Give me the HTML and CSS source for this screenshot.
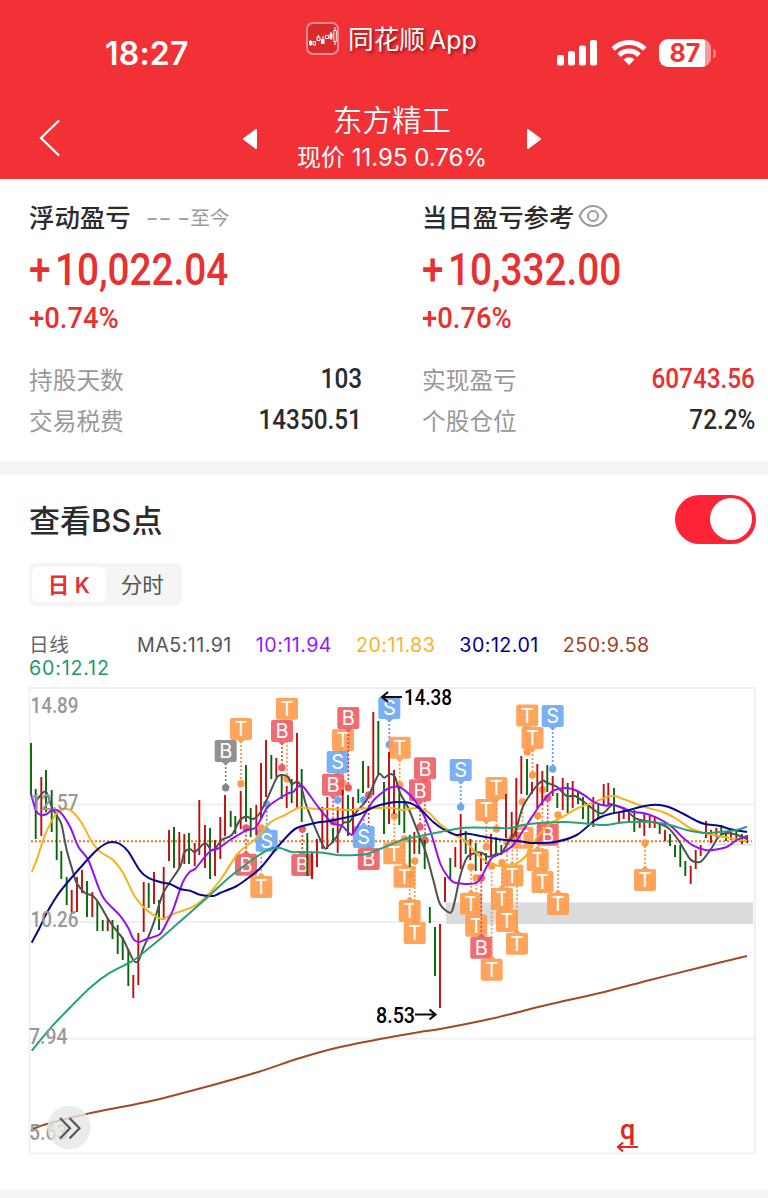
FILE: index.html
```html
<!DOCTYPE html>
<html lang="zh-CN">
<head>
    <meta charset="UTF-8">
    <meta name="viewport" content="width=device-width, initial-scale=1.0">
    <title>东方精工</title>
    <link rel="stylesheet" href="styles.css">
</head>
<body>
    <header class="header">
        <div class="status-bar">
            <span class="time">18:27</span>
            <div class="brand">
                <svg class="brand-icon" width="34" height="34" viewBox="0 0 34 34">
                    <rect x="1" y="1" width="31" height="31" rx="6" fill="#d92a2e" stroke="#f58a8c" stroke-width="2"/>
                    <path d="M4.500 18v6M12.500 13v2M17 14v8M25 10v8M29 5v18" stroke="#fff" stroke-width="1"/>
                    <path d="M3 19h3v4h-3zM15 17h3.500v5h-3.500zM23.500 11.500h3v5h-3z" fill="#fff"/>
                    <path d="M7 19.500h2.500v3.500h-2.500zM11 15h3v3.500h-3zM19.500 13.500h3v3h-3zM27.800 8.500h2.500v11h-2.500z" fill="#d92a2e" stroke="#fff" stroke-width="1"/>
                </svg>
                <span class="brand-name">同花顺<span class="brand-app">App</span></span>
            </div>
            <div class="status-icons">
                <svg width="40" height="26" viewBox="0 0 40 26" fill="#fff">
                    <rect x="0" y="15" width="7" height="10.500" rx="2"/>
                    <rect x="11" y="11" width="7" height="14.500" rx="2"/>
                    <rect x="22" y="5.500" width="7" height="20" rx="2"/>
                    <rect x="33" y="0" width="7" height="25.500" rx="2"/>
                </svg>
                <svg width="36" height="26" viewBox="0 0 36 26" fill="none" stroke="#fff" stroke-width="5">
                    <path d="M2.200 9a22.500 22.500 0 0 1 31.600 0"/>
                    <path d="M8 15.200a14.200 14.200 0 0 1 20 0"/>
                    <path d="M12.500 19.500a7.800 7.800 0 0 1 11 0L18 25.300z" fill="#fff" stroke="none"/>
                </svg>
                <div class="battery"><span>87</span></div>
                <i class="battery-tip"></i>
            </div>
        </div>
        <nav class="nav">
            <svg class="back" width="22" height="38" viewBox="0 0 22 38"><path d="M20 1.500L2 19l18 17.500" fill="none" stroke="#fff" stroke-width="2.200"/></svg>
            <svg class="arrow" width="16" height="22" viewBox="0 0 16 22"><path d="M14 2v18L2 11z" fill="#fff" stroke="#fff" stroke-width="2" stroke-linejoin="round"/></svg>
            <div class="stock">
                <h1>东方精工</h1>
                <p>现价 11.95 0.76%</p>
            </div>
            <svg class="arrow" width="16" height="22" viewBox="0 0 16 22"><path d="M2 2v18l12-9z" fill="#fff" stroke="#fff" stroke-width="2" stroke-linejoin="round"/></svg>
        </nav>
    </header>

    <section class="summary">
        <div class="profit">
            <h2>浮动盈亏<small>−− −至今</small></h2>
            <div class="amount"><span><b>+</b>10,022.04</span></div>
            <div class="percent"><span>+0.74%</span></div>
            <dl>
                <div><dt>持股天数</dt><dd>103</dd></div>
                <div><dt>交易税费</dt><dd>14350.51</dd></div>
            </dl>
        </div>
        <div class="profit">
            <h2>当日盈亏参考<svg class="eye" width="30" height="24" viewBox="0 0 30 24" fill="none" stroke="#999" stroke-width="2"><path d="M1.500 12C4.500 5.200 9 2 15 2s10.500 3.200 13.500 10C25.500 18.800 21 22 15 22S4.500 18.800 1.500 12z"/><circle cx="15" cy="12" r="5"/></svg></h2>
            <div class="amount"><span><b>+</b>10,332.00</span></div>
            <div class="percent"><span>+0.76%</span></div>
            <dl>
                <div><dt>实现盈亏</dt><dd class="up">60743.56</dd></div>
                <div><dt>个股仓位</dt><dd>72.2%</dd></div>
            </dl>
        </div>
    </section>

    <section class="bs">
        <div class="bs-head">
            <h2>查看BS点</h2>
            <div class="switch"></div>
        </div>
        <div class="tabs">
            <span class="tab active">日 K</span>
            <span class="tab">分时</span>
        </div>
        <div class="legend">
            <span class="period">日线</span>
            <span class="ma5">MA5:11.91</span>
            <span class="ma10">10:11.94</span>
            <span class="ma20">20:11.83</span>
            <span class="ma30">30:12.01</span>
            <span class="ma250">250:9.58</span>
            <span class="ma60">60:12.12</span>
        </div>
        <svg class="chart" width="728" height="468" viewBox="28 687 728 468">
            <g class="grid">
                <rect x="29.500" y="688" width="725.500" height="465.500"/>
                <path d="M30 804.500H755M30 922H755M30 1038.700H755"/>
            </g>
            <rect class="band" x="446" y="902.500" width="307" height="21.500"/>
            <path class="base" d="M708 844.700H753"/>
            <path class="price" d="M31 841.200H752"/>
            <g id="markers"></g>
            <g id="candles"></g>
            <g id="lines"></g>
            <g class="axis">
                <text x="30.500" y="712.500" textLength="48" lengthAdjust="spacingAndGlyphs">14.89</text>
                <text x="30.500" y="809.500" textLength="48" lengthAdjust="spacingAndGlyphs">12.57</text>
                <text x="30.500" y="926.500" textLength="48" lengthAdjust="spacingAndGlyphs">10.26</text>
                <text x="29" y="1043.500" textLength="38.500" lengthAdjust="spacingAndGlyphs">7.94</text>
                <text x="29" y="1140" textLength="38.500" lengthAdjust="spacingAndGlyphs">5.63</text>
            </g>
            <g class="note">
                <text x="404" y="705" textLength="48" lengthAdjust="spacingAndGlyphs">14.38</text>
                <path d="M402 697H382M388 692l-6 5 6 5"/>
                <text x="376" y="1022.500" textLength="39" lengthAdjust="spacingAndGlyphs">8.53</text>
                <path d="M415 1014.500H435M429.500 1009.500l6 5-6 5"/>
            </g>
            <g class="event">
                <text x="620" y="1138.500">q</text>
                <path d="M638 1147H618M623 1142.500l-5 4.500 5 4.500"/>
            </g>
            <circle class="more" cx="69" cy="1127.500" r="21.700"/>
            <path class="more-icon" d="M60 1118l10 10.200L60 1138.400M69.500 1118l10 10.200-10 10.200"/>
        </svg>
    </section>

    <script>
        const NS = 'http://www.w3.org/2000/svg';

        function add(parent, tag, attrs, text) {
            const el = document.createElementNS(NS, tag);
            for (const key in attrs) el.setAttribute(key, attrs[key]);
            if (text) el.textContent = text;
            parent.appendChild(el);
            return el;
        }

        // x, high, low, direction
        const candles = `31 743 794 g,35.7 789 839 g,41.3 777 836 r,46 770 812 g,51.7 790 832 g,56.7 812 860 g,61.3 851 879 g,
            66.7 877 905 g,71.7 890 913 r,77 877 912 r,82 870 893 r,87 881 917 g,92.3 892 917 r,97.3 901 931 g,102.7 920 931 g,
            107.7 918 931 r,112.5 920 939 g,117.7 925 954 g,122.7 937 960 g,128.3 949 986 g,133.3 975 998 r,138.3 933 985 r,
            143.7 882 932 r,148.7 883 908 g,154 872 904 r,159 900 930 g,163.7 867 920 r,169 830 861 r,174 827 868 g,
            179.3 832 868 r,184.3 834 864 r,189 833 864 g,194.7 843 866 r,199.3 800 855 r,205 825 868 r,210 828 879 g,
            215 840 876 r,220.3 817 859 r,225 795 836 r,230.7 811 827 g,235.3 816 834 g,240.7 791 829 r,246 765 822 g,
            250.7 808 837 g,256.3 805 835 r,261 763 818 r,266 740 797 r,271.3 755 779 g,276.3 758 777 r,281.7 776 799 g,
            286.7 786 808 r,291.7 779 803 g,297 733 808 r,301.7 769 822 g,307.3 833 876 g,312 853 879 r,317 839 867 r,
            322.3 807 849 r,327.3 797 849 r,333 828 843 g,337.7 807 853 r,342.7 790 823 r,348 795 836 g,353 797 835 r,
            358.3 789 803 g,363 761 793 g,368.3 766 788 r,373.3 712 795 r,378.3 721 775 g,384 782 834 g,389 752 824 r,
            394 770 814 r,399.3 788 825 g,404.3 803 833 g,409.7 835 867 g,414.3 832 854 r,419.3 837 854 g,424.7 840 869 g,
            429.8 907 923 g,435 927 976 g,440 924 1008 r,445 877 902 r,450.3 858 879 g,455.3 847 867 r,460.7 814 869 r,
            465.7 831 854 g,470.3 839 860 r,475.7 843 871 g,481 853 871 r,486 853 864 g,491 834 856 r,496 837 855 g,
            501.3 845 855 g,506 794 838 r,511.7 812 837 r,516.3 778 837 r,521.3 756 794 r,527 759 795 g,532 782 794 r,
            537.3 764 808 r,542.3 771 805 r,547.3 765 792 g,552.7 776 796 r,557.3 793 808 g,562.7 778 810 r,567.7 783 813 g,
            572.7 781 808 r,578 792 804 g,583 797 819 g,588.3 804 823 g,593.3 797 827 r,598.3 803 819 g,603.7 784 805 r,
            608.3 783 805 r,614 788 813 g,619 812 822 r,623.7 807 819 r,629 810 822 r,634.3 810 832 g,639.7 819 828 r,
            644.3 813 836 r,649.7 816 828 r,654.7 816 828 r,659.7 823 834 g,665 830 841 r,670 834 846 g,675 845 857 g,
            680.3 845 867 g,685.3 861 876 g,690.7 866 884 r,695.7 850 869 r,700.7 845 856 r,706 821 838 r,711 830 843 r,
            716.3 828 837 r,721.3 825 835 g,726 832 841 g,731 832 840 r,736.3 829 839 g,742 834 844 g,747 835 843 r`;

        const candleLayer = document.getElementById('candles');
        candles.split(',').forEach(function (row) {
            const [x, high, low, dir] = row.trim().split(' ');
            add(candleLayer, 'path', { d: `M${x} ${high}V${low}`, class: dir === 'r' ? 'rise' : 'fall' });
        });

        // label, kind, badge x, badge y, dot y
        const markers = [
            ['B', 'old', 225.7, 751, 787.7], ['T', 't', 241, 729, 783.7], ['T', 't', 287, 708.7, 779], ['B', 'b', 282, 731, 767.7],
            ['T', 't', 343, 740, 783], ['S', 's', 337.7, 762, 800], ['B', 'b', 333, 784.7, 821.7], ['B', 'b', 348.3, 718, 787.7],
            ['B', 'b', 246, 864.7, 828], ['T', 't', 261.3, 887, 828], ['S', 's', 266.7, 840.7, 804], ['B', 'b', 302.3, 865, 829],
            ['B', 'b', 368.7, 859, 795], ['S', 's', 363.7, 837, 800], ['S', 's', 389.3, 708, 744.7], ['T', 't', 399.7, 747.7, 785],
            ['B', 'b', 425, 768.3, 840], ['B', 'b', 420, 790.3, 827], ['S', 's', 460.7, 770, 807], ['T', 't', 486.3, 810, 846.7],
            ['T', 't', 496.5, 788, 829], ['T', 't', 394.3, 853.3, 816], ['T', 't', 404.5, 876.7, 839], ['T', 't', 409.7, 911, 874.7],
            ['T', 't', 414.7, 933, 861], ['T', 't', 471, 903.7, 867], ['T', 't', 476.2, 925.7, 878], ['B', 'b', 481.3, 947.7, 878],
            ['T', 't', 491.7, 969.7, 866], ['T', 't', 502, 899, 862.7], ['T', 't', 507, 921, 842], ['T', 't', 512.3, 875.5, 838],
            ['T', 't', 517, 943.7, 833], ['T', 't', 527.2, 715.5, 752], ['T', 't', 532.5, 738, 775], ['S', 's', 552.7, 716, 769],
            ['T', 't', 522.5, 837.7, 801.7], ['T', 't', 537.7, 860, 815.7], ['B', 'b', 547.7, 834.7, 798], ['T', 't', 542.5, 882, 789.7],
            ['T', 't', 558, 904, 815], ['T', 't', 645, 880, 843]
        ];

        const markerLayer = document.getElementById('markers');
        markers.forEach(function ([label, kind, x, y, dot]) {
            const g = add(markerLayer, 'g', { class: 'marker ' + kind });
            const dir = dot > y ? 1 : -1;
            add(g, 'path', { class: 'stem', d: `M${x} ${y + dir * 12}V${dot}` });
            add(g, 'circle', { cx: x, cy: dot, r: 3.7 });
            add(g, 'path', { class: 'tip', d: `M${x - 4} ${y + dir * 10.8}h8L${x} ${y + dir * 14.500}z` });
            add(g, 'rect', { x: x - 11, y: y - 11, width: 22, height: 22, rx: 2 });
            add(g, 'text', { x: x, y: y + 7.2 }, label);
        });

        const lines = {
            ma5: '35.7 801.7 42.7 792.7 46.7 792.7 52.3 808 58.3 818 61.7 825 66.7 850 73.3 873 76.7 883 85 893 93 896 100 905 108 919 117.5 932 123 939 133.3 960 138.3 961 143.3 948 148.3 937 154 922 163.3 893 180 867 184 853 190 849 195 852 205 843 211 850 215 849 221.7 840 231.7 835 240 820 246.7 816.7 253 819 260 813 268 797 276.7 777.7 281.7 775 287.7 776.7 291.7 784 297.3 781.7 301.7 788 306.7 806.7 323.3 846 328.3 846 336.7 836.7 343.3 823 349.3 822 356.7 811.7 366.7 800 372.7 786.7 379 774 384.3 777.7 390 774 395 777 400 793 408.3 808 418.3 833 426 853 433.3 880 440 904 450.7 912.7 455 900 460 876.7 466.7 858 475 853 481.7 852.7 488.3 856.7 496.7 854 501.7 853 508.3 841.7 515 833 523 806.7 535 788 542.7 780.7 547.3 783 556.7 786.7 566.7 796 575 796 585 802.7 598.3 812.7 604 812.7 611.7 805 617 806 625 809 635 818 645 821 656.7 822.7 668.3 828 678.3 840 690 859 696 862 701.7 861 711.7 848 718.3 837 726.7 833 736.7 834.7 747 839',
            ma20: '31.7 871.7 36.7 860 45 835 56.7 813 65 809 71.7 811 81.7 823 91.7 841.7 100 851.7 113 860 123 873 135 896.7 146.7 910 156.7 917 163 919 173 914 193 906.7 206.7 896 221.7 878 238.3 853 256.7 838 270 822.7 285 815 298.3 807.7 305 808 318 809 333 809 348 810 363 808.7 390 807.7 401.7 810 416.7 808 428 812 440 824 455 835 465 841 475 851.7 486.7 861.7 498 865.7 506.7 866 515 864.7 526.7 855 536.7 838 548.3 825 563 816.7 578 808 595 802 606.7 797 615 796 620 797.7 633 802.7 648 808 663 812 676.7 819 690 828 703 832.7 723 836.7 747 841',
            ma10: '31 794 36 810.7 40.7 815 46.7 814 52.3 810 60 812 70 826.7 78.3 846.7 88.3 860 98.3 886.7 105 900 120 915.7 128.3 928 133.3 939 139 942 146.7 939 160 934 168 920 173 910 183 881.7 190 871.7 195 869 205 856.7 211.7 850 218 848.7 230 840 240 834 246.7 830 255 828 261.7 817.7 268 806.7 286.7 794 293 792 298 786.7 303.3 786.7 318 806.7 331.7 822.7 341.7 825.7 350 834 353.3 833 363.3 816.7 373.3 800.7 381.7 793 389 788 395 786.7 400 787 410 795 420 808 430 830 440 863 446.7 875 455 882.7 476.7 882.7 486.7 866.7 491.7 858 501.7 853 513.3 845 526.7 825 540 805 551.7 791.7 560 788.7 566.7 788 575 790 585 795.7 595 802.7 606.7 805.7 610 804 620 807 633.3 812 643.3 813 656.7 817.7 671.7 826.7 683.3 838 693.3 845.7 705 850 713 850 726.7 847 736.7 840 747 836',
            ma30: '31.7 942.7 40 927 46.7 913 60 891.7 80 868 95 851.7 105 844 112.3 842 120 844 128.3 851.7 140 870.7 148 877.7 160 882 170 884 180 889 190 890.7 200 894.7 213 896 220 893 236.7 886 250 876.7 261.7 866.7 276.7 848 286.7 836.7 296.7 828 315 823 330 821 345 817.7 360 814 371.7 808 380 805 389 803 396.7 802 410 803 420 809 433 821.7 443 829 456.7 835 466.7 833.5 480 836 496.7 839 523 841.7 531.7 843 555 842 576.7 835 593 821.7 601 817 610 814 626.7 810.7 640 807 655 804.7 668 806.7 681.7 813 696.7 821 705 824 720 826 730 829 747 832',
            ma60: '31.7 1050.7 51.7 1026.7 66.7 1011 90 987.7 110 972.7 133 960.7 146.7 950 160 939 181.7 920 206.7 898 230 876.7 256.7 856.7 270 849 280 848 291.7 852 303 852 323 852.7 336.7 855 356.7 855 366.7 854 380 849 390 845 405 839 421.7 835.7 440 832 465 827.7 500 828 510 828 523 825 540 823 566.7 822 590 824 605 825 619 823 630 822 650 822 670 825 686.7 830 705 833 723 831.7 736.7 830 747 826.7',
            ma250: '32.7 1129 46.7 1124 86.7 1114 136.7 1104 160 1099 213 1085 259 1071.7 300 1058 340 1047 380 1039 420 1032 440 1029 490 1019 546.7 1005 600 993 650 980 700 967.500 747 956'
        };

        // Catmull-Rom curve through the average values
        function curve(data) {
            const n = data.split(' ').map(Number);
            const p = [];
            for (let i = 0; i < n.length; i += 2) p.push([n[i], n[i + 1]]);
            let d = `M${p[0]}`;
            for (let i = 0; i < p.length - 1; i++) {
                const a = p[i - 1] || p[i], b = p[i], c = p[i + 1], e = p[i + 2] || c;
                d += `C${b[0] + (c[0] - a[0]) / 7} ${b[1] + (c[1] - a[1]) / 7} ${c[0] - (e[0] - b[0]) / 7} ${c[1] - (e[1] - b[1]) / 7} ${c[0]} ${c[1]}`;
            }
            return d;
        }

        const lineLayer = document.getElementById('lines');
        for (const name in lines) add(lineLayer, 'path', { class: name, d: curve(lines[name]) });
    </script>
</body>
</html>
```
FILE: styles.css
```css
* {
    box-sizing: border-box;
}

body {
    margin: 0;
    width: 768px;
    height: 1198px;
    overflow: hidden;
    background: #fff;
    color: #2b2b2d;
    font-family: Inter, 'Noto Sans CJK SC', sans-serif;
}

h1, h2, p, dl, dd {
    margin: 0;
    font-weight: 400;
}

svg {
    display: block;
    flex: none;
}

/* Header */
.header {
    height: 179px;
    background: #f23136;
    color: #fff;
}

.status-bar {
    display: flex;
    height: 90px;
    padding: 22px 52px 0 105px;
}

.time {
    width: 201px;
    padding-top: 12px;
    font-size: 32px;
    line-height: 40px;
    font-weight: 600;
    letter-spacing: 0.2px;
}

.brand {
    display: flex;
    width: 251px;
    height: 34px;
    align-items: center;
    gap: 8px;
}

.brand-name {
    font-size: 25.7px;
    line-height: 34px;
    padding-top: 2px;
    white-space: nowrap;
    text-shadow: 2px 2px 3px rgba(80, 0, 0, 0.6);
}

.brand-app {
    margin-left: 4px;
    font-size: 25px;
}

.status-icons {
    display: flex;
    height: 28px;
    margin-top: 17px;
    align-items: center;
}

.status-icons svg + svg {
    margin-left: 14px;
}

.battery {
    width: 52px;
    height: 28px;
    flex: none;
    margin-left: 12px;
    border-radius: 9px;
    background: linear-gradient(90deg, #fff 46px, #f9989b 46px);
    color: #f23136;
    font-size: 25px;
    line-height: 28px;
    font-weight: 700;
    text-align: center;
}

.battery-tip {
    width: 3px;
    height: 9px;
    flex: none;
    margin-left: 2px;
    border-radius: 0 4px 4px 0;
    background: #f77d80;
}

.nav {
    display: flex;
    padding-left: 39px;
    align-items: center;
    height: 89px;
}

.nav .back {
    margin: 7px 181px 0 0;
}

.nav .arrow {
    margin-top: 8px;
}

.stock {
    width: 268px;
    padding-top: 7px;
    text-align: center;
}

.stock h1 {
    font-size: 29.5px;
    line-height: 40px;
    font-weight: 350;
}

.stock p {
    font-size: 24px;
    line-height: 36px;
    white-space: nowrap;
}

/* Profit summary */
.summary {
    display: flex;
    gap: 60px;
    height: 282px;
    padding: 18px 13px 0 29px;
}

.profit {
    width: 333px;
}

.profit h2 {
    display: flex;
    align-items: center;
    height: 38px;
    font-size: 25.4px;
    font-weight: 500;
    white-space: nowrap;
}

.profit small {
    margin-left: 15px;
    color: #999;
    font-size: 19.7px;
    font-weight: 400;
}

.eye {
    margin-left: 4px;
}

.amount,
.percent,
.profit dd {
    font-family: Roboto, sans-serif;
    font-weight: 500;
}

.amount,
.percent {
    color: #e83030;
}

.amount {
    height: 67px;
    font-size: 44px;
    line-height: 70px;
}

.percent {
    height: 32px;
    font-size: 29px;
    line-height: 32px;
}

.amount span,
.percent span {
    display: inline-block;
    transform: scaleX(0.88);
    transform-origin: left;
}

.amount b {
    margin-right: 5px;
    font-weight: 500;
}

.percent span {
    transform: scaleX(0.945);
}

.profit dl {
    margin-top: 24px;
}

.profit dl div {
    display: flex;
    height: 41px;
    align-items: center;
    justify-content: space-between;
}

.profit dt {
    color: #999;
    font-size: 23.7px;
}

.profit dd {
    font-size: 27px;
    transform: scaleX(0.9);
    transform-origin: right;
}

.profit .up {
    color: #e83030;
}

/* BS points */
.bs {
    height: 737px;
    padding: 19px 12px 0 28px;
    border-top: 14px solid #f4f4f4;
    border-bottom: 8px solid #f4f4f4;
}

.bs-head {
    display: flex;
    height: 50px;
    align-items: center;
    justify-content: space-between;
}

.bs-head h2 {
    margin: -2px 0 0 1px;
    font-size: 31px;
    font-weight: 500;
}

.switch {
    display: flex;
    width: 81px;
    height: 49px;
    padding-right: 4px;
    align-items: center;
    justify-content: flex-end;
    border-radius: 25px;
    background: #ff2338;
}

.switch::after {
    content: '';
    width: 42px;
    height: 42px;
    border-radius: 50%;
    background: #fff;
}

.tabs {
    display: flex;
    width: 153px;
    height: 43px;
    margin: 19px 0 0 1px;
    padding: 4px 3px;
    border-radius: 6px;
    background: #f5f5f5;
}

.tab {
    width: 74px;
    color: #555;
    font-size: 21.5px;
    line-height: 36px;
    text-align: center;
}

.tab.active {
    border-radius: 6px;
    background: #fff;
    color: #e83030;
    font-weight: 600;
}

.legend {
    display: flex;
    flex-wrap: wrap;
    height: 53px;
    margin: 28px 0 0 1px;
    gap: 0 24px;
    font-size: 19.7px;
    line-height: 23px;
    letter-spacing: 0.45px;
    align-content: flex-start;
}

.legend .period {
    width: 84px;
    color: #666;
}

.legend .ma5 { color: #555; }
.legend .ma10 { color: #9818f5; }
.legend .ma20 { color: #fbb22b; }
.legend .ma30 { color: #000090; }
.legend .ma250 { color: #a0421c; margin-right: 60px; }
.legend .ma60 { color: #1b9a6c; letter-spacing: 0.8px; }

/* Chart */
.chart {
    overflow: visible;
}

.chart text {
    font-family: Roboto, sans-serif;
}

.grid {
    fill: none;
    stroke: #efefef;
    stroke-width: 1.8;
}

.band {
    fill: #dbdbdb;
}

.base {
    stroke: #ddd;
    stroke-width: 1.5;
}

.price {
    stroke: #f07820;
    stroke-width: 2;
    stroke-dasharray: 2 2;
}

.axis {
    fill: #999;
    font-size: 21.5px;
    font-weight: 500;
}

.note {
    fill: #000;
    font-size: 22px;
    font-weight: 500;
}

.note path,
.event path {
    fill: none;
    stroke: #111;
    stroke-width: 2.2;
}

.event {
    fill: #e02525;
    font-size: 27px;
    font-weight: 500;
}

.event path {
    stroke: #e02525;
}

.rise {
    stroke: #c00c0c;
    stroke-width: 1.9;
}

.fall {
    stroke: #056605;
    stroke-width: 1.9;
}

#lines path {
    fill: none;
    stroke-width: 2;
    stroke-linejoin: round;
}

#lines .ma5 { stroke: #505050; }
#lines .ma10 { stroke: #9510f5; }
#lines .ma20 { stroke: #fbb01e; }
#lines .ma30 { stroke: #08088c; }
#lines .ma60 { stroke: #28a078; }
#lines .ma250 { stroke: #a04a26; }

.marker rect,
.marker .tip {
    fill-opacity: 0.9;
}

.marker.t { fill: #ff9a4b; stroke: #ff9040; }
.marker.b { fill: #ee5c64; stroke: #e8404a; }
.marker.s { fill: #6ba7f3; stroke: #5a9cf0; }
.marker.old { fill: #868686; stroke: #868686; }

.marker rect,
.marker circle,
.marker .tip {
    stroke: none;
}

.marker .stem {
    stroke-width: 1.7;
    stroke-dasharray: 2 2;
}

.chart .marker text {
    fill: #fff;
    stroke: none;
    font-family: Inter, sans-serif;
    font-size: 20px;
    text-anchor: middle;
}

.more {
    fill: #e6e6e6;
    fill-opacity: 0.8;
}

.more-icon {
    fill: none;
    stroke: #555;
    stroke-width: 2.2;
}
```
